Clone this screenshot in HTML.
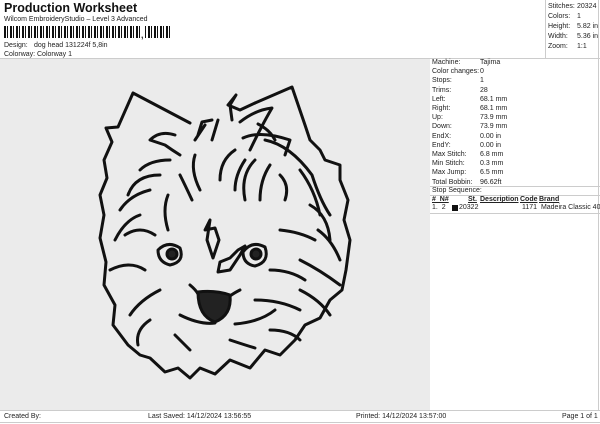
<!DOCTYPE html>
<html><head><style>
*{margin:0;padding:0;box-sizing:border-box}
body{width:600px;height:424px;background:#fff;font-family:"Liberation Sans",sans-serif;color:#222;position:relative;overflow:hidden;font-size:7px}
.a{position:absolute;white-space:nowrap}
</style></head><body>
<div class="a" style="left:4px;top:1px;font-size:12.5px;font-weight:bold;color:#111">Production Worksheet</div>
<div class="a" style="left:4px;top:16px;font-size:7px">Wilcom EmbroideryStudio – Level 3 Advanced</div>
<div class="a" style="left:4px;top:26px;width:168px;height:12px;background:repeating-linear-gradient(90deg,#111 0 2px,#fff 2px 3px,#111 3px 4px,#fff 4px 6px)"></div>
<div class="a" style="left:140px;top:26px;width:4px;height:12px;background:#fff"></div>
<div class="a" style="left:141px;top:30px;font-size:9px;font-weight:bold">,</div>
<div class="a" style="left:4px;top:42px">Design:</div><div class="a" style="left:34px;top:42px">dog head 131224f 5,8in</div>
<div class="a" style="left:4px;top:51px">Colorway:</div><div class="a" style="left:37px;top:51px">Colorway 1</div>
<div class="a" style="left:0;top:58px;width:600px;height:1px;background:#ccc"></div>
<div class="a" style="left:545px;top:0;width:1px;height:58px;background:#ccc"></div>
<div class="a" style="left:598px;top:0;width:1px;height:411px;background:#ccc"></div>
<div class="a" style="left:548px;top:2px;line-height:10px">Stitches:<br>Colors:<br>Height:<br>Width:<br>Zoom:</div>
<div class="a" style="left:577px;top:2px;line-height:10px">20324<br>1<br>5.82 in<br>5.36 in<br>1:1</div>
<div class="a" style="left:0;top:59px;width:430px;height:351px;background:#ebebeb"></div>
<div class="a" style="left:432px;top:58px;line-height:9.2px">Machine:<br>Color changes:<br>Stops:<br>Trims:<br>Left:<br>Right:<br>Up:<br>Down:<br>EndX:<br>EndY:<br>Max Stitch:<br>Min Stitch:<br>Max Jump:<br>Total Bobbin:</div>
<div class="a" style="left:480px;top:58px;line-height:9.2px">Tajima<br>0<br>1<br>28<br>68.1 mm<br>68.1 mm<br>73.9 mm<br>73.9 mm<br>0.00 in<br>0.00 in<br>6.8 mm<br>0.3 mm<br>6.5 mm<br>96.62ft</div>
<div class="a" style="left:430px;top:186px;width:170px;height:1px;background:#ccc"></div>
<div class="a" style="left:432px;top:187px">Stop Sequence:</div>
<div class="a" style="left:430px;top:195px;width:170px;height:1px;background:#ccc"></div>
<div class="a" style="left:432px;top:196px;font-weight:bold;text-decoration:underline">#&nbsp; N#</div>
<div class="a" style="left:468px;top:196px;font-weight:bold;text-decoration:underline">St.</div>
<div class="a" style="left:480px;top:196px;font-weight:bold;text-decoration:underline">Description</div>
<div class="a" style="left:520px;top:196px;font-weight:bold;text-decoration:underline">Code</div>
<div class="a" style="left:539px;top:196px;font-weight:bold;text-decoration:underline">Brand</div>
<div class="a" style="left:432px;top:204px">1.&nbsp; 2</div>
<div class="a" style="left:452px;top:205px;width:6px;height:6px;background:#111"></div>
<div class="a" style="left:459px;top:204px">20322</div>
<div class="a" style="left:522px;top:204px">1171&nbsp; Madeira Classic 40</div>
<div class="a" style="left:430px;top:213px;width:170px;height:1px;background:#ccc"></div>
<div class="a" style="left:0;top:410px;width:600px;height:1px;background:#ccc"></div>
<div class="a" style="left:0;top:422px;width:600px;height:1px;background:#ccc"></div>
<div class="a" style="left:4px;top:413px">Created By:</div>
<div class="a" style="left:148px;top:413px">Last Saved: 14/12/2024 13:56:55</div>
<div class="a" style="left:356px;top:413px">Printed: 14/12/2024 13:57:00</div>
<div class="a" style="left:562px;top:413px">Page 1 of 1</div>
<svg class="a" style="left:0;top:0" width="430" height="410" viewBox="0 0 430 410" fill="none" stroke="#111" stroke-width="3" stroke-linejoin="round" stroke-linecap="round">
<path d="M190,123 L133,93 L118,127 L106,128 L112,142 L104,160 L107,178 L100,195 L104,215 L100,238 L106,262 L104,285 L115,305 L113,325 L128,345 L140,355 L150,358 L165,372 L178,368 L190,378 L200,368 L215,374 L230,360 L250,368 L265,350 L280,355 L295,340 L305,325 L320,318 L330,300 L342,290 L346,270 L350,240 L344,220 L348,200 L340,180 L340,165 L325,160 L320,150 L310,140 L305,125 L292,87 L255,103"/>
<path d="M255,103 L240,110 L228,105 L236,95 L230,105 L232,120"/>
<path d="M212,120 L202,122 L198,135 M205,125 L195,140 M218,120 L212,140"/>
<path d="M240,122 Q255,110 272,108 Q262,125 250,150 M258,124 Q270,130 275,140 M243,138 Q260,130 290,140 L285,155"/>
<path d="M175,135 Q160,130 150,140 L165,145 Q172,150 180,155 M170,160 Q150,160 140,170 M160,175 Q135,175 128,195 M150,190 Q130,195 120,210 M140,215 Q125,220 115,240"/>
<path d="M195,155 Q190,170 200,190 M180,175 Q185,185 192,200 M168,195 Q162,210 168,230"/>
<path d="M235,150 Q220,160 220,180 M245,160 Q235,175 235,190 M255,160 Q240,175 245,200 M270,165 Q260,180 260,200 M280,175 Q290,185 285,200 M265,140 Q290,145 312,175 Q320,200 330,215 M300,170 Q315,190 320,215 M310,205 Q328,215 330,240 M318,230 Q332,240 340,260 M300,260 Q320,270 340,285 M300,290 Q320,300 330,315"/>
<path d="M205,230 L210,220 L207,240 L213,258 L219,240 L215,228 Z"/>
<path d="M220,262 L230,258 L238,250 L245,246 L240,255 L230,270 L218,272 Z"/>
<path d="M158,250 Q168,240 180,248 Q185,262 170,265 Q158,262 158,250 Z M243,252 Q252,240 265,247 Q270,262 255,266 Q243,264 243,252 Z"/>
<circle cx="172" cy="254" r="5" fill="#222"/><circle cx="256" cy="254" r="5" fill="#222"/>
<path d="M198,292 Q215,290 230,295 Q232,315 215,322 Q198,316 198,292 Z" fill="#222"/>
<path d="M190,285 Q196,290 198,294 M240,290 Q234,293 230,296 M180,315 Q200,325 215,323 M235,324 Q260,322 275,310 M255,300 Q280,300 300,310 M160,290 Q140,300 130,315 M150,320 Q135,330 138,345 M175,335 Q185,345 190,350 M230,340 Q245,345 255,348 M270,330 Q290,330 300,340 M110,270 Q130,260 145,270 M125,235 Q140,225 155,235 M280,230 Q300,232 315,240 M270,270 Q290,270 305,280"/>
</svg>
</body></html>
